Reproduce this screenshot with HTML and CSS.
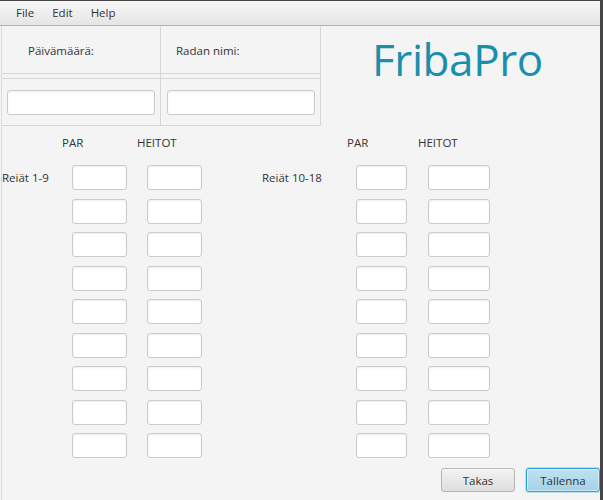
FILE: index.html
```html
<!DOCTYPE html>
<html lang="fi">
<head>
<meta charset="utf-8">
<title>FribaPro</title>
<link rel="stylesheet" href="styles.css">
</head>
<body>
<div class="window">
  <nav class="menubar">
    <span class="menu-item">File</span>
    <span class="menu-item">Edit</span>
    <span class="menu-item">Help</span>
  </nav>
  <div class="content">
    <div class="top">
      <div class="form-grid">
        <div class="form-col first">
          <div class="cell label-cell pad-a">Päivämäärä:</div>
          <div class="cell field-cell pad-c"><input class="field wide" type="text"></div>
        </div>
        <div class="form-col">
          <div class="cell label-cell pad-b">Radan nimi:</div>
          <div class="cell field-cell pad-d"><input class="field wide" type="text"></div>
        </div>
      </div>
      <h1 class="logo">FribaPro</h1>
    </div>

    <div class="holes">
      <div class="heads">
        <span class="head h1">PAR</span>
        <span class="head h2">HEITOT</span>
        <span class="head h3">PAR</span>
        <span class="head h4">HEITOT</span>
      </div>
      <div class="hole-grid">
        <span class="row-label l1">Reiät 1-9</span>
        <span class="row-label l2">Reiät 10-18</span>

        <input class="field par a" type="text"><input class="field throw b" type="text"><input class="field par2 c" type="text"><input class="field throw2 d" type="text">
        <input class="field par a" type="text"><input class="field throw b" type="text"><input class="field par2 c" type="text"><input class="field throw2 d" type="text">
        <input class="field par a" type="text"><input class="field throw b" type="text"><input class="field par2 c" type="text"><input class="field throw2 d" type="text">
        <input class="field par a" type="text"><input class="field throw b" type="text"><input class="field par2 c" type="text"><input class="field throw2 d" type="text">
        <input class="field par a" type="text"><input class="field throw b" type="text"><input class="field par2 c" type="text"><input class="field throw2 d" type="text">
        <input class="field par a" type="text"><input class="field throw b" type="text"><input class="field par2 c" type="text"><input class="field throw2 d" type="text">
        <input class="field par a" type="text"><input class="field throw b" type="text"><input class="field par2 c" type="text"><input class="field throw2 d" type="text">
        <input class="field par a" type="text"><input class="field throw b" type="text"><input class="field par2 c" type="text"><input class="field throw2 d" type="text">
        <input class="field par a" type="text"><input class="field throw b" type="text"><input class="field par2 c" type="text"><input class="field throw2 d" type="text">
      </div>
    </div>

    <div class="actions">
      <button class="btn" type="button">Takas</button>
      <button class="btn default" type="button">Tallenna</button>
    </div>
  </div>
</div>
</body>
</html>
```
FILE: styles.css
```css
* { box-sizing: border-box; }

html, body {
  margin: 0;
  padding: 0;
  height: 100%;
}

body {
  background: #464646;
  font-family: "Open Sans", "Noto Sans", sans-serif;
  font-size: 11.5px;
  color: #333333;
  overflow: hidden;
}

.window {
  width: 600px;
  height: 499px;
  margin-top: 1px;
  background: #f4f4f4;
  display: flex;
  flex-direction: column;
  overflow: hidden;
}

.menubar {
  height: 25px;
  flex: none;
  display: flex;
  align-items: center;
  gap: 18px;
  padding: 0 0 1px 16px;
  background: linear-gradient(#f7f7f7, #e5e5e5);
  border-bottom: 1px solid #b3b3b3;
}

.menu-item {
  line-height: 14px;
  color: #333;
}

.content {
  flex: 1;
  margin-left: 1px;
  border-left: 1px solid #dcdcdc;
  display: flex;
  flex-direction: column;
}

.top {
  display: flex;
  height: 100px;
}

.form-grid {
  display: flex;
  height: 100px;
}

.form-col {
  width: 160px;
  border-right: 1px solid #d6d6d6;
  display: flex;
  flex-direction: column;
}
.form-col.first { width: 159px; }

.cell {
  display: flex;
  align-items: center;
}

.label-cell {
  height: 48px;
  border-bottom: 1px solid #d6d6d6;
  padding-top: 2px;
}

.field-cell {
  height: 48px;
  margin-top: 4px;
  border-top: 1px solid #d6d6d6;
  border-bottom: 1px solid #d6d6d6;
  padding-top: 1px;
}

.pad-a { padding-left: 26px; }
.pad-b { padding-left: 15px; }
.pad-c { padding-left: 5px; }
.pad-d { padding-left: 6px; }

.field {
  display: block;
  height: 25px;
  margin: 0;
  padding: 0 6px;
  background: #ffffff;
  border: 1px solid #cbcbcb;
  border-radius: 3px;
  box-shadow: inset 0 1px 2px rgba(0, 0, 0, 0.07);
  font: inherit;
  outline: none;
}

.field.wide { width: 148px; }

.logo {
  margin: 11px 0 0 51px;
  font-family: "Open Sans", "Noto Sans", sans-serif;
  font-weight: 400;
  font-size: 44px;
  line-height: 1;
  letter-spacing: -0.4px;
  color: #1a8fad;
  height: 44px;
}

.holes {
  margin-top: 10px;
}

.heads {
  display: flex;
  height: 14px;
  line-height: 14px;
  padding-left: 60px;
}

.head { display: block; }
.h1 { width: 75px; }
.h2 { width: 210px; }
.h3 { width: 71px; }

.hole-grid {
  margin-top: 15px;
  display: grid;
  grid-template-columns: 70px 55px 20px 55px 60px 94px 51px 21px 62px;
  grid-auto-rows: 25px;
  row-gap: 8.5px;
}

.row-label {
  grid-row: 1;
  align-self: center;
  line-height: 14px;
  white-space: nowrap;
}
.l1 { grid-column: 1; }
.l2 { grid-column: 6; }

.a { grid-column: 2; width: 55px; }
.b { grid-column: 4; width: 55px; }
.c { grid-column: 7; width: 51px; }
.d { grid-column: 9; width: 62px; }

.actions {
  display: flex;
  justify-content: flex-end;
  gap: 11px;
  margin-top: 10px;
}

.btn {
  width: 74px;
  height: 24px;
  margin: 0;
  padding: 0;
  font: inherit;
  color: #333;
  background: linear-gradient(#f3f3f3, #dedede);
  border: 1px solid #b5b5b5;
  border-radius: 3px;
  box-shadow: inset 0 1px 0 rgba(255, 255, 255, 0.7);
}

.btn.default {
  background: linear-gradient(#bfe1f2, #a5d2e8);
  border: 1px solid #2fa2d8;
  box-shadow: 0 0 0 1px rgba(3, 158, 211, 0.25), inset 0 0 0 1px rgba(255, 255, 255, 0.45);
}
```
